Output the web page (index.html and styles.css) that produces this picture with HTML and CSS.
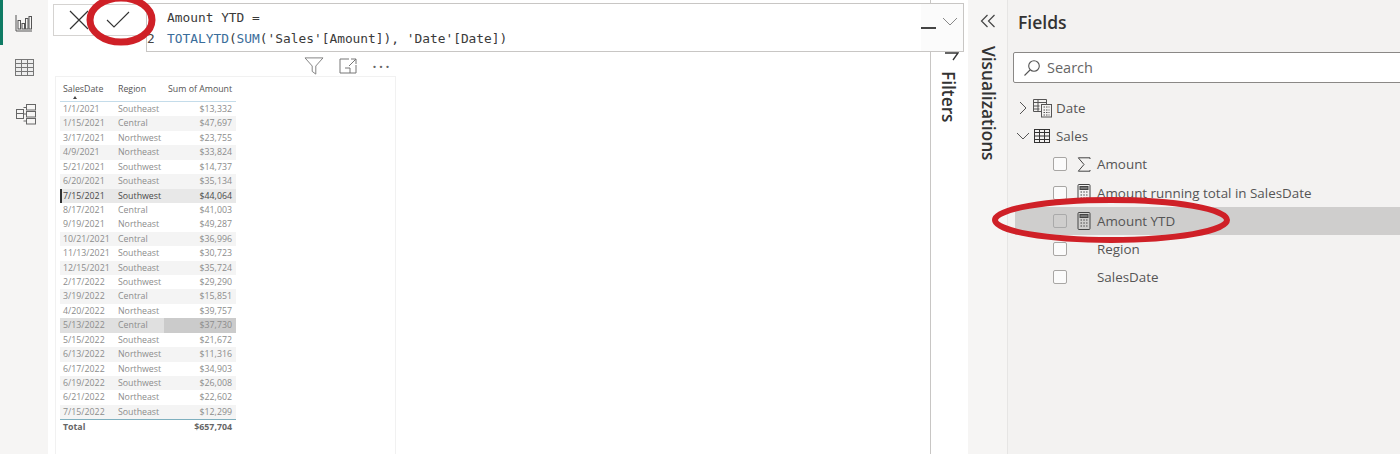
FILE: index.html
```html
<!DOCTYPE html>
<html lang="en">
<head>
    <meta charset="UTF-8">
    <title>Amount YTD</title>
    <link rel="stylesheet" href="styles.css">
</head>
<body>
    <div class="app">
        <!-- Left rail -->
        <aside class="rail">
            <div class="rail-item active">
                <svg width="18" height="18" viewBox="0 0 18 18" fill="none" stroke="#555" stroke-width="1"><path d="M1 1v16h16"/><rect x="3" y="6.5" width="2.5" height="8.5"/><rect x="7" y="9.5" width="2.5" height="5.5"/><rect x="10.5" y="4.5" width="2.5" height="10.5"/><rect x="14" y="2.5" width="2.5" height="12.5"/></svg>
            </div>
            <div class="rail-item">
                <svg width="19" height="18" viewBox="0 0 19 18" fill="none" stroke="#777" stroke-width="1"><rect x="0.5" y="0.5" width="18" height="16" fill="#eee"/><path d="M0.5 4.5h18M0.5 8.5h18M0.5 12.5h18M6.5 0.5v16M12.5 0.5v16"/></svg>
            </div>
            <div class="rail-item model">
                <svg width="22" height="22" viewBox="0 0 22 22" fill="none" stroke="#666" stroke-width="1"><rect x="11.5" y="1.5" width="9" height="5.5"/><rect x="11.5" y="8.5" width="9" height="5.5"/><rect x="11.5" y="15.5" width="9" height="5.5"/><rect x="1.5" y="6.5" width="7" height="9"/><path d="M1.5 10.5h7M8.5 4.5h3M8.5 11h3M8.5 18h3"/></svg>
            </div>
        </aside>

        <!-- Report canvas -->
        <main class="canvas">
            <div class="visual-tools">
                <svg width="20" height="18" viewBox="0 0 22 20" fill="none" stroke="#777" stroke-width="1"><path d="M1 1h20l-8 9v9l-4-3v-6z"/></svg>
                <svg width="18" height="16" viewBox="0 0 18 16" fill="none" stroke="#777" stroke-width="1"><path d="M10 1H1v14h16V7M12 1h5v5M17 1l-7 7M6 10h5v5"/></svg>
                <span class="dots">&middot;&middot;&middot;</span>
            </div>
            <section class="visual">
                <div class="tbl">
                    <div class="row head"><span class="c1">SalesDate</span><span class="c2">Region</span><span class="c3">Sum of Amount</span><i class="sort"></i></div>
                    <div class="row"><span class="c1">1/1/2021</span><span class="c2">Southeast</span><span class="c3">$13,332</span></div>
                    <div class="row alt"><span class="c1">1/15/2021</span><span class="c2">Central</span><span class="c3">$47,697</span></div>
                    <div class="row"><span class="c1">3/17/2021</span><span class="c2">Northwest</span><span class="c3">$23,755</span></div>
                    <div class="row alt"><span class="c1">4/9/2021</span><span class="c2">Northeast</span><span class="c3">$33,824</span></div>
                    <div class="row"><span class="c1">5/21/2021</span><span class="c2">Southwest</span><span class="c3">$14,737</span></div>
                    <div class="row alt"><span class="c1">6/20/2021</span><span class="c2">Southeast</span><span class="c3">$35,134</span></div>
                    <div class="row current"><span class="c1">7/15/2021</span><span class="c2">Southwest</span><span class="c3">$44,064</span></div>
                    <div class="row"><span class="c1">8/17/2021</span><span class="c2">Central</span><span class="c3">$41,003</span></div>
                    <div class="row"><span class="c1">9/19/2021</span><span class="c2">Northeast</span><span class="c3">$49,287</span></div>
                    <div class="row alt"><span class="c1">10/21/2021</span><span class="c2">Central</span><span class="c3">$36,996</span></div>
                    <div class="row"><span class="c1">11/13/2021</span><span class="c2">Southeast</span><span class="c3">$30,723</span></div>
                    <div class="row alt"><span class="c1">12/15/2021</span><span class="c2">Southeast</span><span class="c3">$35,724</span></div>
                    <div class="row"><span class="c1">2/17/2022</span><span class="c2">Southwest</span><span class="c3">$29,290</span></div>
                    <div class="row alt"><span class="c1">3/19/2022</span><span class="c2">Central</span><span class="c3">$15,851</span></div>
                    <div class="row"><span class="c1">4/20/2022</span><span class="c2">Northeast</span><span class="c3">$39,757</span></div>
                    <div class="row marked"><span class="c1">5/13/2022</span><span class="c2">Central</span><span class="c3">$37,730</span></div>
                    <div class="row"><span class="c1">5/15/2022</span><span class="c2">Southeast</span><span class="c3">$21,672</span></div>
                    <div class="row alt"><span class="c1">6/13/2022</span><span class="c2">Northwest</span><span class="c3">$11,316</span></div>
                    <div class="row"><span class="c1">6/17/2022</span><span class="c2">Northwest</span><span class="c3">$34,903</span></div>
                    <div class="row alt"><span class="c1">6/19/2022</span><span class="c2">Southwest</span><span class="c3">$26,008</span></div>
                    <div class="row"><span class="c1">6/21/2022</span><span class="c2">Northeast</span><span class="c3">$22,602</span></div>
                    <div class="row alt"><span class="c1">7/15/2022</span><span class="c2">Southeast</span><span class="c3">$12,299</span></div>
                    <div class="row total"><span class="c1">Total</span><span class="c2"></span><span class="c3">$657,704</span></div>
                </div>
            </section>
        </main>

        <!-- Collapsed panes -->
        <div class="pane-filters">
            <span class="vtext">Filters</span>
        </div>
        <div class="pane-viz">
            <svg class="collapse" width="16" height="14" viewBox="0 0 16 14" fill="none" stroke="#444" stroke-width="1.2"><path d="M7.5 1L1.5 7l6 6M14.5 1l-6 6 6 6"/></svg>
            <span class="vtext">Visualizations</span>
        </div>

        <!-- Fields pane -->
        <aside class="fields">
            <h2>Fields</h2>
            <div class="search">
                <svg width="18" height="18" viewBox="0 0 18 18" fill="none" stroke="#555" stroke-width="1.1"><circle cx="11" cy="7" r="5.3"/><path d="M7 11L1.5 16.5"/></svg>
                <span>Search</span>
            </div>
            <ul class="tree">
                <li class="group">
                    <svg class="chev" width="10" height="14" viewBox="0 0 10 14" fill="none" stroke="#555"><path d="M2 1l6 6-6 6"/></svg>
                    <svg class="tbl-icon" width="20" height="20" viewBox="0 0 20 20" fill="none" stroke="#555"><path d="M0.5 1.5h13v12h-13zM0.5 4.5h13M0.5 8h6M0.5 11h6M5 1.5v12"/><rect x="8.5" y="6.5" width="10" height="12.5" fill="#f3f2f1"/><path d="M10.5 9h6M10.5 12h6M10.5 14.5h6M10.5 17h6" stroke-dasharray="1.5 1"/></svg>
                    <span>Date</span>
                </li>
                <li class="group open">
                    <svg class="chev" width="14" height="10" viewBox="0 0 14 10" fill="none" stroke="#555"><path d="M1 2l6 6 6-6"/></svg>
                    <svg class="tbl-icon" width="16" height="14" viewBox="0 0 16 14" fill="none" stroke="#333"><rect x="0.5" y="0.5" width="15" height="13"/><path d="M0.5 3.5h15M0.5 7h15M0.5 10.5h15M5.5 0.5v13M10.5 0.5v13"/></svg>
                    <span>Sales</span>
                </li>
                <li class="field">
                    <i class="check"></i>
                    <svg class="field-icon" width="13" height="15" viewBox="0 0 13 15" fill="none" stroke="#444" stroke-width="1"><path d="M12.5 2V.8H.8l5.7 6.7-5.7 6.7h11.7V13"/></svg>
                    <span>Amount</span>
                </li>
                <li class="field">
                    <i class="check"></i>
                    <svg class="field-icon" width="13" height="18" viewBox="0 0 13 18" fill="none" stroke="#444"><rect x="0.5" y="0.5" width="12" height="17" rx="1"/><rect x="2.5" y="2.5" width="8" height="3" fill="#777"/><path d="M3 8h7M3 11h7M3 14h7" stroke-dasharray="1.5 1.3"/></svg>
                    <span>Amount running total in SalesDate</span>
                </li>
                <li class="field selected">
                    <i class="check"></i>
                    <svg class="field-icon" width="13" height="18" viewBox="0 0 13 18" fill="none" stroke="#444"><rect x="0.5" y="0.5" width="12" height="17" rx="1"/><rect x="2.5" y="2.5" width="8" height="3" fill="#777"/><path d="M3 8h7M3 11h7M3 14h7" stroke-dasharray="1.5 1.3"/></svg>
                    <span>Amount YTD</span>
                </li>
                <li class="field">
                    <i class="check"></i>
                    <span class="no-icon">Region</span>
                </li>
                <li class="field">
                    <i class="check"></i>
                    <span class="no-icon">SalesDate</span>
                </li>
            </ul>
        </aside>

        <!-- Formula bar, lies over the panes -->
        <div class="formula-actions">
            <svg width="20" height="20" viewBox="0 0 20 20" fill="none" stroke="#333" stroke-width="1.2"><path d="M1 1l18 18M19 1L1 19"/></svg>
            <svg width="24" height="18" viewBox="0 0 24 18" fill="none" stroke="#333" stroke-width="1.1"><path d="M1 9l7 7L23 1"/></svg>
        </div>
        <div class="formula">
            <div class="code">
                <div class="line">Amount YTD =</div>
                <div class="line"><b class="num">2</b><span class="fn">TOTALYTD</span>(<span class="fn">SUM</span>(<span class="str">'Sales'</span>[Amount]), <span class="str">'Date'</span>[Date])</div>
            </div>
            <div class="formula-end">
                <i class="dash"></i>
                <svg width="16" height="9" viewBox="0 0 16 9" fill="none" stroke="#888"><path d="M1 1l7 7 7-7"/></svg>
            </div>
        </div>
        <svg class="filter-peek" width="14" height="10" viewBox="0 0 14 10" fill="none" stroke="#333" stroke-width="1.3"><path d="M0 1h13L8 8"/></svg>

        <!-- Red annotations -->
        <svg class="marks" width="1400" height="454" viewBox="0 0 1400 454" fill="none" stroke="#cf2027">
            <ellipse cx="121" cy="20" rx="31" ry="22" stroke-width="7"/>
            <ellipse cx="1111" cy="220" rx="116" ry="20" stroke-width="6"/>
        </svg>
    </div>
</body>
</html>
```

FILE: styles.css
```css
/* General Reset */
* {
    margin: 0;
    padding: 0;
    box-sizing: border-box;
}

body {
    font-family: "Open Sans", "Noto Sans", sans-serif;
    background-color: #fff;
    color: #333;
}

.app {
    position: relative;
    display: flex;
    width: 1400px;
    height: 454px;
    overflow: hidden;
}

/* Left rail */
.rail {
    width: 48px;
    flex-shrink: 0;
    background: #f6f5f4;
    display: flex;
    flex-direction: column;
    align-items: center;
    padding-top: 2px;
}

.rail-item {
    width: 100%;
    height: 46px;
    display: flex;
    align-items: center;
    justify-content: center;
}

.rail-item.active {
    border-left: 3px solid #0f7b64;
    padding-right: 3px;
    margin-top: -2px;
    height: 45px;
}

.rail-item.model {
    padding-left: 3px;
}

/* Report canvas */
.canvas {
    width: 882px;
    flex-shrink: 0;
    background: #fff;
    padding: 56px 0 0 7px;
}

.visual-tools {
    height: 20px;
    width: 341px;
    display: flex;
    align-items: center;
    justify-content: flex-end;
    gap: 15px;
    padding-right: 6px;
}

.dots {
    font-size: 19px;
    line-height: 14px;
    width: 18px;
    letter-spacing: 1.5px;
    color: #666;
}

.visual {
    width: 341px;
    height: 400px;
    border: 1px solid #f1f1f1;
    padding: 5px 160px 0 4px;
}

/* Table visual */
.tbl {
    font-size: 8.8px;
    color: #8c8c8c;
    width: 176px;
}

.row {
    position: relative;
    display: flex;
    height: 14.43px;
    line-height: 14.43px;
    padding-left: 3px;
    white-space: nowrap;
}

.c1 {
    width: 55px;
}

.c2 {
    width: 50px;
}

.c3 {
    width: 64px;
    text-align: right;
}

.alt {
    background: #f4f4f4;
}

.head {
    height: 20px;
    line-height: 14px;
    color: #555;
    border-bottom: 1px solid #c4dcea;
}

.sort {
    position: absolute;
    left: 13px;
    top: 14px;
    border-left: 2.5px solid transparent;
    border-right: 2.5px solid transparent;
    border-bottom: 3px solid #444;
}

.current {
    background: #e8e8e8;
    color: #4a4a4a;
    box-shadow: inset 2px 0 0 #333;
}

.marked {
    background: linear-gradient(to right, #e0e0e0 104px, #cbcbcb 104px);
}

.total {
    height: 16px;
    line-height: 15px;
    border-top: 1px solid #7fb0bf;
    font-weight: 700;
    color: #666;
}

/* Collapsed panes */
.pane-filters {
    width: 38px;
    flex-shrink: 0;
    border-left: 1px solid #c8c6c4;
    background: #fff;
    padding: 71px 0 0 7px;
}

.pane-viz {
    width: 40px;
    flex-shrink: 0;
    background: #f6f5f4;
    border-right: 1px solid #e6e5e4;
    display: flex;
    flex-direction: column;
    align-items: center;
    padding-top: 14px;
}

.collapse {
    margin-bottom: 18px;
}

.vtext {
    writing-mode: vertical-rl;
    font-size: 17.3px;
    font-weight: 600;
    color: #333;
    line-height: 20px;
}

/* Fields pane */
.fields {
    flex: 1;
    background: #f3f2f1;
    padding: 10px 0 0 5px;
    min-width: 0;
}

.fields h2 {
    font-size: 17.5px;
    font-weight: 600;
    line-height: 24px;
    margin-left: 5px;
    color: #333;
}

.search {
    margin-top: 18px;
    width: 400px;
    height: 31px;
    background: #fff;
    border: 1px solid #8a8886;
    border-radius: 2px;
    display: flex;
    align-items: center;
    gap: 6px;
    padding-left: 9px;
    font-size: 14.5px;
    color: #666;
}

.tree {
    list-style: none;
    margin-top: 11px;
    margin-left: 2px;
    font-size: 13.4px;
    color: #555;
}

.tree li {
    position: relative;
    height: 28.2px;
    display: flex;
    align-items: center;
}

.group .chev {
    width: 14px;
    margin-left: 1px;
}

.group .tbl-icon {
    margin-left: 3px;
    width: 20px;
}

.group span {
    margin-left: 3px;
}

.group.open .tbl-icon {
    width: 18px;
    margin-left: 3px;
}

.group.open span {
    margin-left: 5px;
}

.field {
    padding-left: 38px;
}

.field .check {
    width: 14px;
    height: 14px;
    background: #fbfbfb;
    border: 1px solid #a8a6a4;
    border-radius: 2px;
    flex-shrink: 0;
}

.field-icon {
    margin-left: 10px;
    width: 14px;
    flex-shrink: 0;
}

.field span {
    margin-left: 6px;
    white-space: nowrap;
}

.field span.no-icon {
    margin-left: 30px;
}

.selected {
    background: #cfcecd;
}

.selected .check {
    background: #cfcecd;
    border-color: #aaa;
}

/* Formula bar */
.formula-actions {
    position: absolute;
    left: 53px;
    top: 4px;
    width: 94px;
    height: 32px;
    background: #fff;
    border: 1px solid #d5d3d1;
    display: flex;
    align-items: center;
    gap: 17px;
    padding-left: 15px;
}

.formula {
    position: absolute;
    left: 146px;
    top: 3px;
    width: 818px;
    height: 49px;
    background: #fff;
    border: 1px solid #c8c6c4;
    display: flex;
    justify-content: space-between;
}

.code {
    font-family: "DejaVu Sans Mono", "Liberation Mono", monospace;
    font-size: 12.85px;
    line-height: 21px;
    color: #3a3a3a;
    padding: 3px 0 0 20px;
}

.line {
    position: relative;
}

.num {
    position: absolute;
    left: -20px;
    font-weight: 400;
    color: #444;
}

.fn {
    color: #3a6d9a;
}

.str {
    color: #3a3a3a;
}

.formula-end {
    position: relative;
    width: 42px;
    background: #fbfbfb;
    display: flex;
    justify-content: flex-end;
    padding: 13px 5px 0 0;
}

.dash {
    position: absolute;
    left: 0;
    top: 23px;
    width: 15px;
    height: 2px;
    background: #444;
}

.filter-peek {
    position: absolute;
    left: 945px;
    top: 52px;
}

/* Red annotations */
.marks {
    position: absolute;
    left: 0;
    top: 0;
    pointer-events: none;
}
```
